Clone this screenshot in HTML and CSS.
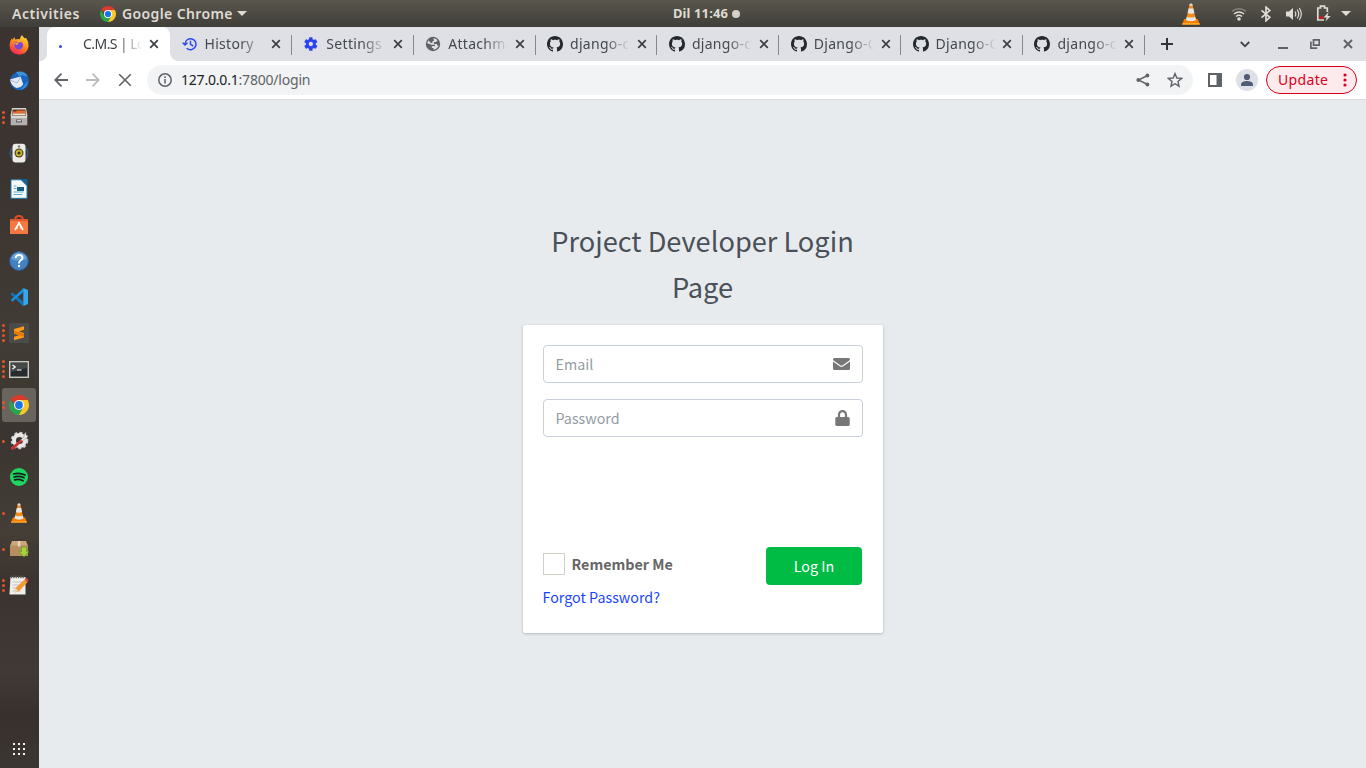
FILE: index.html
```html
<!DOCTYPE html>
<html lang="en">
<head>
<meta charset="utf-8">
<title>C.M.S | Log in</title>
<link rel="stylesheet" href="styles.css">
</head>
<body>
<svg class="defs" aria-hidden="true">
  <symbol id="x" viewBox="0 0 10 10"><path d="M1.2 1.2l7.6 7.6M8.8 1.2L1.2 8.8" fill="none" stroke="#3c4043" stroke-width="1.7"/></symbol>
  <symbol id="github" viewBox="0 0 16 16"><path fill="#24292f" d="M8 0C3.58 0 0 3.58 0 8c0 3.54 2.29 6.53 5.47 7.59.4.07.55-.17.55-.38 0-.19-.01-.82-.01-1.49-2.01.37-2.53-.49-2.69-.94-.09-.23-.48-.94-.82-1.13-.28-.15-.68-.52-.01-.53.63-.01 1.08.58 1.23.82.72 1.21 1.87.87 2.33.66.07-.52.28-.87.51-1.07-1.78-.2-3.64-.89-3.64-3.95 0-.87.31-1.59.82-2.15-.08-.2-.36-1.02.08-2.12 0 0 .67-.21 2.2.82.64-.18 1.32-.27 2-.27s1.36.09 2 .27c1.53-1.04 2.2-.82 2.2-.82.44 1.1.16 1.92.08 2.12.51.56.82 1.27.82 2.15 0 3.07-1.87 3.75-3.65 3.95.29.25.54.73.54 1.48 0 1.07-.01 1.93-.01 2.2 0 .21.15.46.55.38A8.01 8.01 0 0 0 16 8c0-4.42-3.58-8-8-8z"/></symbol>
  <symbol id="chrome" viewBox="0 0 20 20"><path d="M10 10L1.34 5A10 10 0 0 1 18.66 5z" fill="#dc3a2c"/><path d="M10 10V5h8.66A10 10 0 0 1 10 20z" fill="#fcc827"/><path d="M10 10l4.3 2.5L10 20A10 10 0 0 1 1.34 5l4.4 7.5z" fill="#2da24c"/><circle cx="10" cy="10" r="5" fill="#fff"/><circle cx="10" cy="10" r="3.9" fill="#1b73e8"/></symbol>
  <symbol id="vlc" viewBox="0 0 20 20"><path d="M3.2 14.5h13.6l1.9 4.8H1.3z" fill="#f57c00"/><path d="M1.5 18.2h17l.3 1.5H1.2z" fill="#ffa726"/><path d="M8.7.8q1.3-.8 2.6 0L15 15.5q-5 2.4-10 0z" fill="#f58b18"/><path d="M7.6 5h4.8l1 4.1q-3.4 1.3-6.8 0zM5.8 12.4q4.2 1.7 8.4 0l.8 3.1q-5 2.3-10 0z" fill="#e7e7e7"/><path d="M8.7.8q1.3-.8 2.6 0l.4 1.6H8.3z" fill="#ddd"/></symbol>
</svg>

<header class="topbar">
  <span class="activities">Activities</span>
  <svg class="app-icon"><use href="#chrome"/></svg>
  <span class="app-name">Google Chrome</span>
  <i class="caret"></i>
  <div class="clock">Dil 11:46<i class="dot"></i></div>
  <div class="tray">
    <svg class="tray-vlc" width="20" height="22" viewBox="0 0 20 20" preserveAspectRatio="none"><use href="#vlc"/></svg>
    <svg class="tray-wifi" width="16" height="14" viewBox="0 0 16 14" fill="none" stroke-width="1.5"><path d="M1 4.3q7-5.2 14 0" stroke="#85827d"/><path d="M3 7q5-4 10 0M5 9.5q3-2.4 6 0" stroke="#dedbd5"/><circle cx="8" cy="12" r="1.8" fill="#dedbd5"/></svg>
    <svg class="tray-bt" width="12" height="16" viewBox="0 0 12 16" fill="none" stroke="#dedbd5" stroke-width="1.7"><path d="M1.5 4.3l8.3 7L6 14.8V1.2l3.8 3.4-8.3 7.1"/></svg>
    <svg class="tray-vol" width="16" height="14" viewBox="0 0 16 14"><path d="M0 4.5h3L7 1v12L3 9.500H0z" fill="#dedbd5"/><path d="M9 4.500q1.600 2.500 0 5M11.200 2.700q3 4.300 0 8.600M13.300 1q4 6 0 12" fill="none" stroke="#dedbd5" stroke-width="1.200"/></svg>
    <svg class="tray-bat" width="15" height="17" viewBox="0 0 15 17"><path d="M11.300 7V3H8.500V1.200h-4V3H1.800v12H8" fill="none" stroke="#dedbd5" stroke-width="1.700"/><path d="M3.300 11.500h4.200v2.300H3.300z" fill="#e0131b"/><path d="M12.600 7.300L7.500 12.500h3.300l-1.500 4 5.500-5.500h-3.300z" fill="#dedbd5"/></svg>
    <i class="caret"></i>
  </div>
</header>

<div class="desktop">
<aside class="dock">
  <div class="app"><svg width="20" height="20" viewBox="0 0 20 20"><defs><linearGradient id="ff" x1=".8" y1="0" x2=".3" y2="1"><stop offset="0" stop-color="#ffe33b"/><stop offset=".5" stop-color="#ff8a1d"/><stop offset="1" stop-color="#f5205b"/></linearGradient></defs><path d="M13 0q1 2 3 3.500l1-.7Q20 7 19.600 11.500 18 19.500 10 19.700.8 19 .5 10.500.5 6 3 3l.4 2L5.500 2l.7 2.600Q9 3.800 11 4.300 11 2 13 0z" fill="url(#ff)"/><path d="M7 6.500l1.800 1.400L11.500 7q2 .3 2.600 2.500.3 3.700-3.300 4.800-4.300.6-5.500-3.300l.2-3z" fill="#7b45d9"/><path d="M5 8.200q2.500-.8 4.500.3L8 10z" fill="#ffa72b"/></svg></div>
  <div class="app"><svg width="20" height="20" viewBox="0 0 20 20"><circle cx="10.500" cy="10" r="9.300" fill="#1964bd"/><path d="M7 1q9-2 12 5-5-3-9-1z" fill="#3c93dd"/><path d="M19 10q-.5 7-7.500 9l4-5z" fill="#3194dc"/><path d="M1 8.500l10.500-3 2.700 7.800q-2 3.500-6.700 3.600Q2.500 15.500 1 8.500z" fill="#e6ebf3"/><path d="M1.500 9l6.500 3L11.500 6" fill="none" stroke="#aab9d0"/></svg></div>
  <div class="app"><span class="pips"><i></i><i></i><i></i></span><svg width="18" height="20" viewBox="0 0 18 20"><path d="M2 1h14l1.500 8H.5z" fill="#d7d3ce"/><path d="M2.500 2.500h13v7h-13z" fill="#593320"/><path d="M3 4.500h3l1-1h8v3H3z" fill="#e56d2e"/><path d="M3 6.500h12v2H3z" fill="#eee5d5"/><path d="M.7 9h16.600v9.300H.7z" fill="#b3b1af"/><path d="M1 9h16v2H1z" fill="#dad8d5"/><path d="M6 12.500h6v3H6z" fill="#646464"/><path d="M7 13.200h4v1H7z" fill="#eee"/></svg></div>
  <div class="app"><svg width="20" height="20" viewBox="0 0 20 20"><path d="M3 5Q-.5 10 3 15M17 5q3.500 5 0 10" fill="none" stroke="#3a5a7c" stroke-width="1.500"/><rect x="3.500" y=".8" width="13" height="18.700" rx="3" fill="#ecebe8"/><circle cx="10" cy="10" r="4.500" fill="#554c20"/><circle cx="10" cy="10" r="3.200" fill="#c9b82d"/><circle cx="10" cy="10" r="1.500" fill="#373520"/><circle cx="10" cy="3.500" r="1.200" fill="#777"/></svg></div>
  <div class="app"><svg width="18" height="20" viewBox="0 0 18 20"><path d="M1 .8h10.500l5.500 5.500v13H1z" fill="#f7fafc" stroke="#277aac"/><path d="M10 0h7.500v7.500z" fill="#13628f"/><path d="M3.500 7h3M3.500 9.500h3M3.500 13h10M3.500 15.500h9" stroke="#61a9cd" stroke-width="1.200"/><path d="M7 8h7v4H7z" fill="#186281"/></svg></div>
  <div class="app"><svg width="18" height="20" viewBox="0 0 18 20"><path d="M5.500 5V2.500Q9-.8 12.500 2.500V5" fill="none" stroke="#e44925" stroke-width="2"/><path d="M0 4h18v15H0z" fill="#f57842"/><path d="M0 4h18v2H0z" fill="#e55a2c"/><path d="M5 15l4-7 4 7M6.200 13h1.500M10.300 13h1.500" fill="none" stroke="#fff" stroke-width="1.700"/></svg></div>
  <div class="app"><svg width="20" height="20" viewBox="0 0 20 20"><circle cx="10" cy="10" r="9.300" fill="#4382c2" stroke="#2964a4"/><path d="M2 8Q4 1.500 10 1.500T18 8q-8 3-16 0z" fill="#6ba2d7"/><path d="M6.700 7q0-3 3.500-3 3.300 0 3.300 2.700 0 1.500-2 2.800-1.500 1-1.500 3" fill="none" stroke="#fff" stroke-width="1.900"/><circle cx="10" cy="15" r="1.200" fill="#fff"/></svg></div>
  <div class="app"><svg width="18" height="18" viewBox="0 0 18 18"><path d="M1 5.500L2.500 4.500 13 13.500V18L1 6.500z" fill="#0c75bd"/><path d="M.7 12L2.300 13.700 13.500 4V0z" fill="#168fd8"/><path d="M13.300 0L18 2v14l-4.700 2z" fill="#34a8ef"/></svg></div>
  <div class="app"><span class="pips"><i></i><i></i><i></i><i></i></span><svg width="20" height="20" viewBox="0 0 20 20"><rect width="20" height="20" rx="1" fill="#4b4b4c"/><path d="M5 6l10-2.700v3.500L10 8.500l5 1.500v4.500L5 17.200v-3.500l5-1.500-5-1.500z" fill="#ff9a14"/><path d="M5 7.800l10 3v2.900L5 10.700z" fill="#df7a0a"/></svg></div>
  <div class="app"><span class="pips"><i></i><i></i><i></i><i></i></span><svg width="20" height="17" viewBox="0 0 20 17"><rect x=".7" y=".7" width="18.600" height="15.600" fill="#272b2b" stroke="#c6c6c2" stroke-width="1.500"/><path d="M2 2h16v5L2 11z" fill="#454a49"/><path d="M3.500 4l2.800 2-2.800 2M8 9h4.500" fill="none" stroke="#fff" stroke-width="1.200"/></svg></div>
  <div class="app active"><span class="pips"><i></i><i></i></span><svg width="20" height="20"><use href="#chrome"/></svg></div>
  <div class="app"><span class="pips"><i></i></span><svg width="19" height="20" viewBox="0 0 19 20"><circle cx="9.500" cy="9.500" r="7.800" fill="none" stroke="#cacaca" stroke-width="2" stroke-dasharray="3 2.200"/><circle cx="9.500" cy="9.500" r="5.500" fill="none" stroke="#e7e7e6" stroke-width="4"/><path d="M10 9.500l4-3.500q-.5-3 2-5v3l2 1q-1 3-3.300 2.700L11.500 11z" fill="#ededed" stroke="#777" stroke-width=".5"/><path d="M10.800 8.500l1.700 1.800L3 19l-2-.5v-2z" fill="#c83338"/></svg></div>
  <div class="app"><svg width="18" height="18" viewBox="0 0 18 18"><circle cx="9" cy="9" r="9" fill="#1ed760"/><path d="M3.500 6q6-1.800 11.500 1M4 9q5-1.500 10 .8M4.600 11.800q4.400-1 8.400 1" fill="none" stroke="#1b1d1c" stroke-width="1.700" stroke-linecap="round"/></svg></div>
  <div class="app"><span class="pips"><i></i></span><svg width="18" height="20" viewBox="0 0 20 20" preserveAspectRatio="none"><use href="#vlc"/></svg></div>
  <div class="app"><span class="pips"><i></i></span><svg width="19" height="18" viewBox="0 0 19 18"><path d="M2 1h14l2 5H0z" fill="#caa779"/><path d="M0 5.500h18V16H0z" fill="#b68e60"/><path d="M7.800 1h2.500v5.500H7.800z" fill="#e6d7be"/><path d="M11.500 7h5v4.500H19l-5 5.500-5-5.500h2.500z" fill="#a1d438" stroke="#65921b" stroke-width=".6"/></svg></div>
  <div class="app"><span class="pips"><i></i><i></i><i></i></span><svg width="20" height="20" viewBox="0 0 20 20"><path d="M1.500 2h15v17.500H.5z" fill="#f0f0ed"/><path d="M2 1.800h14" stroke="#555" stroke-width="2.800" stroke-dasharray="1.300 1"/><path d="M3.500 7h10M3.500 10h10M3.500 13h8M3.500 16h8" stroke="#c4c5c5"/><path d="M6.500 13L15.500 4.500l3 2.700-8.500 9-4 1.300z" fill="#f19b35"/><path d="M15.500 4.500L17.500 3l2 2-1 2.200z" fill="#e44750"/><path d="M6.500 13l3 3-4 1.500z" fill="#ead9b8"/></svg></div>
  <svg class="grid" width="13" height="13" viewBox="0 0 13 13" fill="#f4f4f2"><path d="M0 0h2v2H0zM5 0h2v2H5zM10 0h2v2h-2zM0 5h2v2H0zM5 5h2v2H5zM10 5h2v2h-2zM0 10h2v2H0zM5 10h2v2H5zM10 10h2v2h-2z"/></svg>
</aside>

<div class="browser">
  <div class="tabs">
    <div class="edge"></div>
    <div class="tab current"><span class="fav"><i class="spinner"></i></span><span class="label">C.M.S | Log in</span><svg class="close"><use href="#x"/></svg></div>
    <div class="tab"><svg class="fav" viewBox="0 0 16 16" fill="none" stroke="#3048ee" stroke-width="1.500"><path d="M3 8a5.500 5.500 0 1 1 1.700 4.200M.7 6.700L3 9l2.500-2.300M8.500 4.700v3.700l2.700 1.600"/></svg><span class="label">History</span><svg class="close"><use href="#x"/></svg></div>
    <div class="tab"><svg class="fav" viewBox="-1 -1 26 26"><path fill="#2c42f0" d="M19.800 13.100a8 8 0 0 0 0-2.200l2.300-1.800a.6.600 0 0 0 .1-.7L20 4.600a.6.600 0 0 0-.7-.2l-2.700 1.100a8 8 0 0 0-1.900-1.100L14.300 1.500a.6.600 0 0 0-.6-.5h-4a.6.600 0 0 0-.6.500l-.4 2.900a8 8 0 0 0-1.900 1.100L4.100 4.400a.6.600 0 0 0-.7.200L1.300 8.400a.6.600 0 0 0 .1.700l2.400 1.800a8 8 0 0 0 0 2.200l-2.400 1.800a.6.600 0 0 0-.1.700l2.100 3.800c.1.200.4.300.7.200l2.700-1.100a8 8 0 0 0 1.900 1.100l.4 2.900c.1.300.3.500.6.500h4c.3 0 .5-.2.600-.5l.4-2.900a8 8 0 0 0 1.900-1.100l2.700 1.100c.3.100.6 0 .7-.2l2.200-3.800a.6.600 0 0 0-.1-.7zM11.800 15.500a3.500 3.500 0 1 1 0-7 3.500 3.500 0 0 1 0 7z"/></svg><span class="label">Settings</span><svg class="close"><use href="#x"/></svg></div>
    <div class="tab"><svg class="fav" viewBox="0 0 16 16"><circle cx="8" cy="8" r="7.200" fill="#5f6368"/><path d="M8.500 2.300q2.500 0 4 2L11 6H9v2h3v1.500h1.700Q12.500 13 8.500 13.700V12H6.800v-1.700l3.200-.3V8.700H6.500L2.300 7.200q.2-1.500 1-2.700L6 7h1.500V5H9z" fill="#dee0e6"/></svg><span class="label">Attachments</span><svg class="close"><use href="#x"/></svg></div>
    <div class="tab"><svg class="fav"><use href="#github"/></svg><span class="label">django-cms</span><svg class="close"><use href="#x"/></svg></div>
    <div class="tab"><svg class="fav"><use href="#github"/></svg><span class="label">django-cms</span><svg class="close"><use href="#x"/></svg></div>
    <div class="tab"><svg class="fav"><use href="#github"/></svg><span class="label">Django-CMS</span><svg class="close"><use href="#x"/></svg></div>
    <div class="tab"><svg class="fav"><use href="#github"/></svg><span class="label">Django-CMS</span><svg class="close"><use href="#x"/></svg></div>
    <div class="tab"><svg class="fav"><use href="#github"/></svg><span class="label">django-cms</span><svg class="close"><use href="#x"/></svg></div>
    <svg class="newtab" width="12" height="12"><path d="M6 0v12M0 6h12" stroke="#303438" stroke-width="2"/></svg>
    <div class="winctl">
      <svg width="10" height="7"><path d="M.8 1L5 5.300 9.200 1" fill="none" stroke="#3c4043" stroke-width="1.800"/></svg>
      <svg width="10" height="11"><path d="M0 9h10" stroke="#5f6368" stroke-width="2"/></svg>
      <svg width="10" height="10" fill="none" stroke="#5f6368" stroke-width="1.700"><path d="M3.500.9h5.700v5.300H3.500zM.9 2.500v6.600h6.300"/></svg>
      <svg width="10" height="10" viewBox="0 0 10 10"><path d="M1 1l8 8M9 1L1 9" stroke="#5f6368" stroke-width="1.900"/></svg>
    </div>
  </div>

  <div class="toolbar">
    <svg class="nav" width="14" height="14" viewBox="0 0 14 14" fill="none" stroke="#5f6368" stroke-width="1.800"><path d="M14 7H1.500M7.500.7L1.300 7l6.200 6.300"/></svg>
    <svg class="nav" width="14" height="14" viewBox="0 0 14 14" fill="none" stroke="#bbbcbe" stroke-width="1.800"><path d="M0 7h12.500M6.500.7L12.700 7l-6.200 6.300"/></svg>
    <svg class="nav" width="14" height="14" viewBox="0 0 14 14" fill="none" stroke="#5f6368" stroke-width="1.600"><path d="M1.200 1.200l11.600 11.600M12.800 1.200L1.200 12.800"/></svg>
    <div class="url">
      <svg width="14" height="14" fill="none" stroke="#5f6368" stroke-width="1.500"><circle cx="7" cy="7" r="6.200"/><path d="M7 6v4.500M7 3.300v1.600"/></svg>
      <span class="address"><b>127.0.0.1</b>:7800/login</span>
      <svg class="share" width="14" height="14"><path d="M11.500 2.500L2.500 7l9 4.500" fill="none" stroke="#5f6368" stroke-width="1.400"/><g fill="#5f6368"><circle cx="11.400" cy="2.500" r="1.900"/><circle cx="2.300" cy="7" r="1.900"/><circle cx="11.400" cy="11.500" r="1.900"/></g></svg>
      <svg width="16" height="16" viewBox="0 0 15 15"><path d="M7.500 1.500l1.700 4.100 4.500.4-3.400 2.900 1 4.400-3.800-2.300-3.800 2.300 1-4.400L1.300 6l4.500-.4z" fill="none" stroke="#5f6368" stroke-width="1.300"/></svg>
    </div>
    <svg class="side" width="14" height="14"><path d="M1 1h12v12H1z" fill="none" stroke="#5f6368" stroke-width="2"/><path d="M8.500 0H14v14H8.500z" fill="#5f6368"/></svg>
    <svg class="avatar" width="22" height="22"><circle cx="11" cy="11" r="11" fill="#dee0e7"/><circle cx="11" cy="8" r="3.100" fill="#525d75"/><path d="M5 17v-1.500Q5 12 11 12t6 3.500V17z" fill="#525d75"/></svg>
    <div class="update"><span>Update</span><svg width="4" height="14" fill="#d9001b"><circle cx="2" cy="2" r="1.600"/><circle cx="2" cy="7" r="1.600"/><circle cx="2" cy="12" r="1.600"/></svg></div>
  </div>

  <main class="page">
    <h1>Project Developer Login Page</h1>
    <form class="card">
      <div class="field"><span>Email</span><svg width="17" height="12" viewBox="0 0 17 12" fill="#777"><path d="M1.500 0h14Q17 0 17 1.500v.6L9.800 7.300Q8.500 8.200 7.200 7.300L0 2.100v-.6Q0 0 1.500 0z"/><path d="M0 3.400l6.700 4.800q1.800 1.200 3.600 0L17 3.400v7.100q0 1.500-1.500 1.500h-14Q0 12 0 10.500z"/></svg></div>
      <div class="field"><span>Password</span><svg width="15" height="16" viewBox="0 0 15 16"><path d="M4 7.500V4.600a3.500 3.500 0 0 1 7 0v2.900" fill="none" stroke="#777" stroke-width="2.200"/><rect x=".3" y="7" width="14.400" height="9" rx="1.500" fill="#777"/></svg></div>
      <div class="actions">
        <div class="remember"><i class="box"></i><label>Remember Me</label></div>
        <button type="button">Log In</button>
      </div>
      <a class="forgot">Forgot Password?</a>
    </form>
  </main>
</div>
</div>
</body>
</html>
```
FILE: styles.css
```css
* { box-sizing: border-box; }
body { margin: 0; width: 1366px; height: 768px; overflow: hidden; display: flex; flex-direction: column; font-family: "Noto Sans", "Open Sans", sans-serif; }
svg { display: block; flex: none; }
.defs { position: absolute; width: 0; height: 0; }

.topbar { height: 27px; flex: none; display: grid; grid-template-columns: auto auto auto auto 1fr auto; align-items: center; padding: 0 15px 0 12px; color: #dfdbd2; font-size: 14px; font-weight: 600; line-height: 27px; background: linear-gradient(#59564d, #403e39); }
.activities { width: 88px; letter-spacing: .55px; }
.app-icon { width: 16px; height: 16px; }
.app-name { width: 121px; padding-left: 6px; letter-spacing: .38px; white-space: nowrap; }
.caret { width: 0; height: 0; border: 5px solid transparent; border-top-color: #dfdbd2; border-bottom: 0; }
.clock { display: flex; align-items: center; padding-left: 426px; font-size: 13px; letter-spacing: .1px; white-space: nowrap; }
.clock { font-weight: 700; }
.dot { width: 8px; height: 8px; margin-left: 4px; border-radius: 50%; background: #d4d1cb; }
.tray { display: flex; align-items: center; }
.tray-vlc { margin-right: 30px; }
.tray-wifi { margin-right: 13px; }
.tray-bt { margin-right: 14px; }
.tray-vol { margin-right: 14px; }
.tray-bat { margin-right: 10px; }

.desktop { display: flex; flex: 1; min-height: 0; }
.dock { width: 39px; flex: none; display: flex; flex-direction: column; align-items: center; padding: 1px 2px 0 0; background: linear-gradient(#3b332f 0, #3b3430 20%, #423c36 43%, #3b3531 55%, #443e37 68%, #3b332f 75%, #403935 87%, #37302c 93%, #3c3632); }
.app { position: relative; width: 34px; height: 34px; margin-bottom: 2px; display: flex; align-items: center; justify-content: center; border-radius: 3px; }
.app svg { margin-right: -1px; }
.app.active { background: #6a645f; }
.pips { position: absolute; left: 0; top: 0; height: 100%; display: flex; flex-direction: column; justify-content: center; gap: 2px; }
.pips i { width: 3px; height: 3px; border-radius: 50%; background: #e95420; }
.grid { margin: 139px -1px 0 0; }

.browser { flex: 1; min-width: 0; display: flex; flex-direction: column; }
.tabs { height: 34px; flex: none; display: flex; background: #dee0e6; color: #45494e; }
.edge { width: 8px; background: #fff; }
.edge::before { content: ""; display: block; height: 34px; background: #dee0e6; border-bottom-right-radius: 7px; }
.tab { width: 121.85px; flex: none; display: flex; align-items: center; padding: 0 10.5px 0 11.500px; position: relative; }
.tab:nth-child(n+3)::after { content: ""; position: absolute; right: 0; top: 8px; width: 1px; height: 20px; background: #85898f; }
.tab.current { width: 123px; padding: 0 11px 0 13px; background: #fff; border-radius: 8px 8px 0 0; }
.current + .tab { background: radial-gradient(circle at 100% 0, #dee0e6 7.500px, #fff 8px) 0 100% / 8px 8px no-repeat; }
.fav { width: 16px; height: 16px; flex: none; }
.spinner { display: block; width: 3px; height: 3px; margin: 9px 0 0 -1px; background: #3048d8; border-radius: 50%; }
.label { width: 60px; margin-left: 7px; overflow: hidden; white-space: nowrap; font-size: 14px; line-height: 20px; letter-spacing: .3px; -webkit-mask-image: linear-gradient(90deg, #000 60%, transparent); mask-image: linear-gradient(90deg, #000 60%, transparent); }
.current .label { width: 59px; color: #3c4043; letter-spacing: -.55px; }
.close { width: 10px; height: 10px; margin-left: auto; }
.newtab { margin: 11px 0 0 16px; }
.winctl { margin-left: auto; padding-right: 13px; display: flex; align-items: center; gap: 27px; }
.winctl svg:nth-child(2) { margin: 0 -1px 0 1px; }
.winctl svg:nth-child(3) { margin-left: -4px; }
.winctl svg:nth-child(4) { margin-left: -4px; }

.toolbar { height: 39px; flex: none; display: flex; align-items: center; padding: 0 9px 0 15px; background: #fff; border-bottom: 1px solid #d9dbde; }
.nav { margin-right: 18px; }
.url { width: 1046px; height: 30px; margin-left: -3px; padding: 0 10px 0 11px; border-radius: 15px; background: #f1f3f4; display: flex; align-items: center; color: #5f6368; }
.address { flex: 1; margin-left: 9px; padding-bottom: 2px; font-size: 14px; letter-spacing: -.2px; }
.address b { font-weight: 400; color: #202124; }
.share { margin-right: 17px; }
.side { margin-left: 15px; }
.avatar { margin-left: 14px; }
.update { width: 91px; height: 28px; margin-left: auto; padding: 0 9.500px 0 11px; border: 1px solid #d9001b; border-radius: 14px; background: #fdeaec; color: #d9001b; display: flex; align-items: center; justify-content: space-between; font-size: 14px; letter-spacing: .35px; }
.update span { padding-bottom: 2px; }

.page { flex: 1; display: flex; flex-direction: column; align-items: center; padding-top: 117px; background: #e7ebee; font-family: "Noto Sans CJK SC", sans-serif; }
h1 { width: 360px; margin: 0 0 16px; color: #495057; font-size: 27.200px; font-weight: 400; line-height: 46px; text-align: center; }
.card { width: 360px; height: 308px; padding: 20px; background: #fff; border-radius: 2px; box-shadow: 0 0 1px rgba(0,0,0,.125), 0 1px 3px rgba(0,0,0,.2); font-size: 14.300px; }
.field { height: 38px; margin-bottom: 16px; padding: 0 12px; display: flex; align-items: center; justify-content: space-between; border: 1px solid #c9d0d9; border-radius: 4px; color: #939ba2; }
.field span { padding-bottom: 2px; }
.actions { margin-top: 110px; height: 38px; display: flex; justify-content: space-between; padding-right: 1px; }
.remember { display: flex; align-items: center; height: 34px; color: #666; font-weight: 700; }
.remember label { padding-bottom: 2px; }
.box { width: 22px; height: 22px; margin-right: 7px; border: 1px solid #d3cfc8; }
button { width: 96px; height: 38px; padding: 0 0 2px 1px; border: 0; border-radius: 4px; background: #00bc45; color: #fff; font: inherit; }
.forgot { display: block; line-height: 24px; color: #1a44ff; }
```
